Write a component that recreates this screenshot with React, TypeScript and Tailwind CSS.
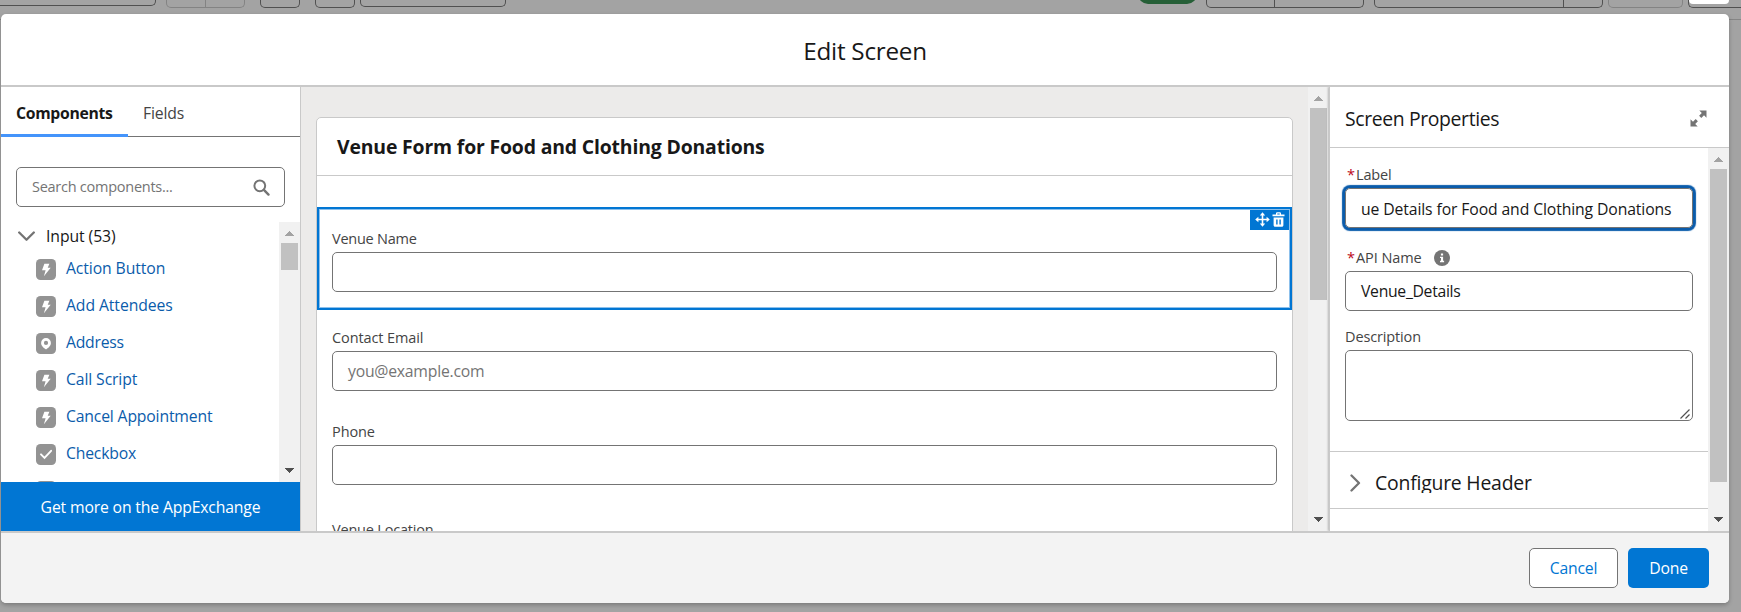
import type { ReactNode } from "react";

function ScrollArrow({ up = false }: { up?: boolean }) {
  return (
    <svg width="21" height="21" viewBox="0 0 21 21" className="shrink-0" shapeRendering="crispEdges">
      {up ? <path d="M5.5 14h10l-5-5z" fill="#a3a3a3" /> : <path d="M5.5 7h10l-5 5z" fill="#505050" />}
    </svg>
  );
}

function Scrollbar({ thumb }: { thumb: string }) {
  return (
    <div className="flex w-[21px] shrink-0 flex-col items-center justify-between bg-[#f1f1f1]">
      <div className="flex flex-col items-center">
        <ScrollArrow up />
        <div className={`w-[17px] bg-[#c1c1c1] ${thumb}`} />
      </div>
      <ScrollArrow />
    </div>
  );
}

function Bolt() {
  return <path d="M8.4 4.800h5l-1.700 3.900h3L7.900 17.300l1.700-6H6z" fill="#fff" />;
}
function Pin() {
  return (
    <path
      fillRule="evenodd"
      d="M10 5a4.900 4.900 0 0 0-4.900 4.900c0 3.200 3.300 5.200 4.500 6.300.3.2.6.2.8 0 1.200-1.100 4.500-3.100 4.500-6.300A4.900 4.900 0 0 0 10 5zm0 7a2.100 2.100 0 1 1 0-4.200 2.100 2.100 0 0 1 0 4.200z"
      fill="#fff"
    />
  );
}
function Check() {
  return <path d="M5 10.300l3.500 3.500 6.600-7" fill="none" stroke="#fff" strokeWidth="1.900" strokeLinecap="round" />;
}

const items: { name: string; icon: ReactNode; track: string }[] = [
  { name: "Action Button", icon: <Bolt />, track: "tracking-[-0.1px]" },
  { name: "Add Attendees", icon: <Bolt />, track: "tracking-[-0.09px]" },
  { name: "Address", icon: <Pin />, track: "tracking-[-0.25px]" },
  { name: "Call Script", icon: <Bolt />, track: "tracking-[-0.12px]" },
  { name: "Cancel Appointment", icon: <Bolt />, track: "tracking-[-0.17px]" },
  { name: "Checkbox", icon: <Check />, track: "tracking-[-0.19px]" },
  { name: "", icon: null, track: "" },
];

function LeftPanel() {
  return (
    <div className="flex w-[300px] shrink-0 flex-col border-r border-[#c9c9c9] bg-white">
      <div className="flex h-[50px] shrink-0 text-[15.75px] leading-[53px]">
        <div className="h-[50px] w-[127px] border-b-3 border-[#4494fb] pl-[15px] font-bold tracking-[-0.3px] text-[#181818]">
          Components
        </div>
        <div className="h-[50px] flex-1 border-b border-[#747474] pl-[15px] tracking-[-0.15px] text-[#444]">Fields</div>
      </div>
      <div className="mx-[15px] mt-[30px] flex h-10 w-[269px] shrink-0 items-center justify-between rounded-[5px] border border-[#747474] pr-[14px] pl-[15px]">
        <span className="text-[14.5px] tracking-[-0.26px] text-[#747474]">Search components...</span>
        <svg width="17" height="17" viewBox="0 0 17 17" fill="none" stroke="#747474">
          <circle cx="6.800" cy="6.800" r="5.400" strokeWidth="2" />
          <path d="M10.900 10.900l4.600 4.700" strokeWidth="2.400" strokeLinecap="round" />
        </svg>
      </div>
      <div className="mt-[15px] flex h-[260px] shrink-0 overflow-hidden">
        <div className="flex-1">
          <div className="flex h-[29px] items-center pl-[17px]">
            <svg width="17" height="11" viewBox="0 0 17 11" className="-mt-px">
              <path d="M1.200 1.500l7.300 7.300 7.300-7.300" fill="none" stroke="#747474" strokeWidth="2.300" strokeLinecap="round" strokeLinejoin="round" />
            </svg>
            <span className="mt-px ml-[11px] text-[15.75px] tracking-[-0.08px] text-[#181818]">Input (53)</span>
          </div>
          {items.map((it, i) => (
            <div key={i} className="flex h-[37px] items-center pl-[35px]">
              <svg width="20" height="21" viewBox="0 0 20 21">
                <rect width="20" height="21" rx="4.500" fill="#939393" />
                {it.icon}
              </svg>
              <span className={`-mt-px ml-[10px] text-[15.75px] text-[#0b5cab] ${it.track}`}>{it.name}</span>
            </div>
          ))}
        </div>
        <Scrollbar thumb="h-[27px]" />
      </div>
      <div className="flex h-[49px] shrink-0 items-center justify-center bg-[#0176d3] pt-[2px] text-[15.75px] tracking-[-0.16px] text-white">
        Get more on the AppExchange
      </div>
    </div>
  );
}

function Canvas() {
  return (
    <div className="flex w-[1028px] shrink-0 bg-[#ecebea]">
      <div className="flex-1 pt-[30px] pl-[15px]">
        <div className="h-[520px] w-[977px] rounded-t-[5px] border border-[#c9c9c9] bg-white text-[14.5px] text-[#444]">
          <div className="h-[58px] border-b border-[#c9c9c9] pl-[20px] text-[19.4px] leading-[58px] font-bold tracking-[-0.16px] text-[#181818]">
            Venue Form for Food and Clothing Donations
          </div>
          <div className="relative mt-[31px] h-[103px] border-2 border-[#0176d3] px-[13px] shadow-[inset_0_0_0_1px_#8cc0ec]">
            <div className="absolute top-0 right-0 flex h-[21px] w-[40px] items-center gap-[2px] bg-[#0176d3] pl-[5px] shadow-[inset_-1px_1px_0_0_#8cc0ec]">
              <svg width="15" height="15" viewBox="0 0 15 15" fill="none" stroke="#fff">
                <path d="M7.500 2v11M2 7.500h11" strokeWidth="1.600" />
                <path d="M7.500.2l2.700 3.200H4.800zM7.500 14.800l2.700-3.200H4.800zM.2 7.500l3.200-2.700v5.400zM14.800 7.500l-3.200-2.700v5.400z" fill="#fff" stroke="none" />
              </svg>
              <svg width="13" height="15" viewBox="0 0 13 15">
                <path
                  fillRule="evenodd"
                  fill="#fff"
                  d="M4 2.500V1.700C4 .8 4.600.3 5.400.3h2.200c.8 0 1.400.5 1.400 1.400v.8h3.500v1.700H.5V2.500zm1.300 0h2.400v-.9H5.300zM1.600 5.500h9.800v7.700c0 .9-.7 1.500-1.500 1.500H3.100c-.8 0-1.500-.6-1.500-1.500zm2.600 2v5h1.400v-5zm3.200 0v5h1.400v-5z"
                />
              </svg>
            </div>
            <div className="pt-[19px] leading-[22px] tracking-[-0.24px]">Venue Name</div>
            <div className="mt-[2px] h-10 w-[945px] rounded-[5px] border border-[#747474]" />
          </div>
          <div className="px-[15px]">
            <div className="mt-[17px] leading-[22px] tracking-[-0.11px]">Contact Email</div>
            <div className="mt-[2px] flex h-10 items-center rounded-[5px] border border-[#747474] pt-[2px] pl-[15px] text-[15.75px] tracking-[-0.23px] text-[#747474]">
              you@example.com
            </div>
            <div className="mt-[30px] leading-[22px] tracking-[-0.09px]">Phone</div>
            <div className="mt-[2px] h-10 rounded-[5px] border border-[#747474]" />
            <div className="mt-[34px] leading-[22px] tracking-[-0.2px]">Venue Location</div>
          </div>
        </div>
      </div>
      <Scrollbar thumb="h-[192px]" />
    </div>
  );
}

function Star() {
  return <span className="mr-[2px] ml-[2px] inline-block w-[7px] text-[#ba0517]">*</span>;
}

function Properties() {
  return (
    <div className="relative z-10 flex flex-1 flex-col border-l border-[#c9c9c9] bg-white shadow-[-1px_0_2px_0_rgba(0,0,0,0.25)]">
      <div className="flex h-[61px] shrink-0 items-center justify-between border-b border-[#c9c9c9] pt-[3px] pr-[22px] pl-[15px]">
        <span className="pt-px text-[19.4px] tracking-[-0.37px] text-[#181818]">Screen Properties</span>
        <svg width="17" height="17" viewBox="0 0 17 17" fill="#747474">
          <path d="M9.300.5h7.200v7.200l-2.500-2.500-2.700 2.700-2.200-2.200 2.700-2.700zM.5 9.300v7.200h7.200l-2.500-2.500 2.700-2.700-2.200-2.200-2.700 2.700z" />
        </svg>
      </div>
      <div className="flex h-[383px] overflow-hidden">
        <div className="w-[378px] text-[14.5px] text-[#444]">
          <div className="px-[15px] pt-[16px]">
            <div className="leading-[22px] tracking-[-0.19px]">
              <Star />
              Label
            </div>
            <div className="mt-[2px] flex h-10 items-center rounded-[5px] border border-[#747474] pt-[3px] pl-[15px] text-[15.75px] tracking-[-0.12px] whitespace-nowrap text-[#181818] shadow-[0_0_0_2px_#0b5cab,0_0_1px_3px_#0b5cab]">
              ue Details for Food and Clothing Donations
            </div>
            <div className="mt-[19px] flex items-center leading-[22px] tracking-[-0.08px]">
              <Star />
              API Name
              <svg width="16" height="16" viewBox="0 0 16 16" className="ml-[12px]">
                <circle cx="8" cy="8" r="8" fill="#747474" />
                <path d="M6.900 3.600h2.200v2H6.900zM6 6.800h3.100v4h1v1.400H6v-1.400h1V8.100H6z" fill="#fff" />
              </svg>
            </div>
            <div className="mt-[2px] flex h-10 items-center rounded-[5px] border border-[#747474] pt-[2px] pl-[15px] text-[15.75px] tracking-[-0.3px] text-[#181818]">
              Venue_Details
            </div>
            <div className="mt-[15px] leading-[22px] tracking-[-0.14px]">Description</div>
            <div className="mt-[2px] flex h-[71px] items-end justify-end rounded-[5px] border border-[#747474] p-px pr-[2px]">
              <svg width="10" height="10" viewBox="0 0 10 10" stroke="#505050" strokeWidth="1.200">
                <path d="M.5 9.500l9-9M5.500 9.500l4-4" />
              </svg>
            </div>
          </div>
          <div className="mt-[30px] flex h-[58px] items-center border-y border-[#c9c9c9] pl-[20px]">
            <svg width="11" height="18" viewBox="0 0 11 18" className="mt-[6px]">
              <path d="M1.500 1.500l7.500 7.500-7.500 7.500" fill="none" stroke="#747474" strokeWidth="2.300" strokeLinecap="round" strokeLinejoin="round" />
            </svg>
            <span className="mt-[2px] ml-[14px] h-[23px] overflow-hidden text-[19.4px] leading-[25px] tracking-[-0.21px] text-[#181818]">
              Configure Header
            </span>
          </div>
        </div>
        <Scrollbar thumb="h-[313px]" />
      </div>
    </div>
  );
}

function Toolbar() {
  return (
    <div className="flex h-[14px] w-[1741px] items-start overflow-hidden">
      <div className="h-[6px] w-[156px] rounded-br-[5px] border-r border-b border-[#505050]" />
      <div className="ml-[10px] flex h-[8px] w-[79px] rounded-b-[5px] border border-t-0 border-[#838383]">
        <div className="w-[39px] border-r border-[#838383]" />
      </div>
      <div className="ml-[15px] h-[8px] w-[40px] rounded-b-[5px] border border-t-0 border-[#505050]" />
      <div className="ml-[15px] h-[8px] w-[40px] rounded-b-[5px] border border-t-0 border-[#505050]" />
      <div className="ml-[5px] h-[7px] w-[146px] rounded-b-[5px] border border-t-0 border-[#505050]" />
      <div className="ml-[632px] h-[4px] w-[59px] overflow-hidden">
        <div className="-mt-[16px] h-[20px] rounded-[10px] bg-[#265f37]" />
      </div>
      <div className="ml-[9px] flex h-[8px] w-[158px] rounded-b-[5px] border border-t-0 border-[#505050]">
        <div className="w-[68px] border-r border-[#505050]" />
      </div>
      <div className="ml-[10px] flex h-[8px] w-[229px] rounded-b-[5px] border border-t-0 border-[#505050]">
        <div className="w-[189px] border-r border-[#505050]" />
      </div>
      <div className="ml-[5px] h-[8px] w-[75px] rounded-b-[5px] border border-t-0 border-[#838383]" />
      <div className="ml-[5px] h-[8px] w-[53px] rounded-bl-[5px] border-b border-l border-[#505050]">
        <div className="h-[4px] w-[40px] rounded-b-[4px] bg-white" />
      </div>
    </div>
  );
}

export default function App() {
  return (
    <div className="relative h-[612px] w-[1741px] overflow-hidden bg-[#a3a3a3] font-['Open_Sans','Noto_Sans',sans-serif]">
      <div className="absolute top-[19px] left-0 h-px w-full bg-[#858585]" />
      <Toolbar />
      <div className="relative ml-px flex h-[589px] w-[1728px] flex-col overflow-hidden rounded-[5px] bg-white shadow-[0_2px_4px_rgba(0,0,0,0.25)]">
        <div className="flex h-[73px] shrink-0 items-center justify-center border-b-2 border-[#c9c9c9] pt-[4px] text-[24.25px] tracking-[-0.25px] text-[#181818]">
          Edit Screen
        </div>
        <div className="flex h-[444px] shrink-0 overflow-hidden">
          <LeftPanel />
          <Canvas />
          <Properties />
        </div>
        <div className="relative z-20 flex h-[72px] shrink-0 justify-end gap-[10px] border-t-2 border-[#c9c9c9] bg-[#f3f3f3] pt-[15px] pr-[20px] text-[15.75px]">
          <button className="h-10 w-[89px] rounded-[5px] border border-[#747474] bg-white pt-px tracking-[-0.2px] text-[#0176d3]">
            Cancel
          </button>
          <button className="h-10 w-[81px] rounded-[5px] bg-[#0176d3] pt-px tracking-[-0.19px] text-white">Done</button>
        </div>
      </div>
    </div>
  );
}
